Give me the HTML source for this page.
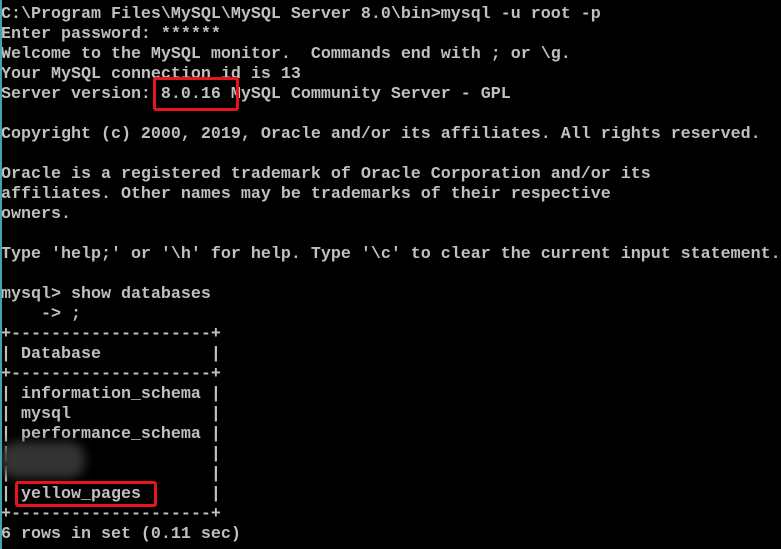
<!DOCTYPE html>
<html><head><style>
html,body{margin:0;padding:0;background:#000;}
body{width:781px;height:549px;overflow:hidden;position:relative;}
pre{margin:0;position:absolute;left:1px;top:5px;font-family:"Liberation Mono",monospace;font-size:16.67px;line-height:20px;color:#c0c0c0;font-weight:bold;letter-spacing:0;}
.edge{position:absolute;left:0;top:0;width:2px;height:549px;background:#3aa8a8;}
.box{position:absolute;border:3px solid #e8141c;border-radius:3px;}
.blur{position:absolute;left:0;top:442px;width:85px;height:36px;background:#333;filter:blur(5px);border-radius:16px;}
</style></head><body>
<pre>C:\Program Files\MySQL\MySQL Server 8.0\bin>mysql -u root -p
Enter password: ******
Welcome to the MySQL monitor.  Commands end with ; or \g.
Your MySQL connection id is 13
Server version: 8.0.16 MySQL Community Server - GPL

Copyright (c) 2000, 2019, Oracle and/or its affiliates. All rights reserved.

Oracle is a registered trademark of Oracle Corporation and/or its
affiliates. Other names may be trademarks of their respective
owners.

Type 'help;' or '\h' for help. Type '\c' to clear the current input statement.

mysql> show databases
    -> ;
+--------------------+
| Database           |
+--------------------+
| information_schema |
| mysql              |
| performance_schema |
|                    |
|                    |
| yellow_pages       |
+--------------------+
6 rows in set (0.11 sec)</pre>
<div class="blur"></div>
<div class="edge"></div>
<div class="box" style="left:153px;top:77px;width:80px;height:28px;"></div>
<div class="box" style="left:15px;top:481px;width:136px;height:20px;"></div>
</body></html>
